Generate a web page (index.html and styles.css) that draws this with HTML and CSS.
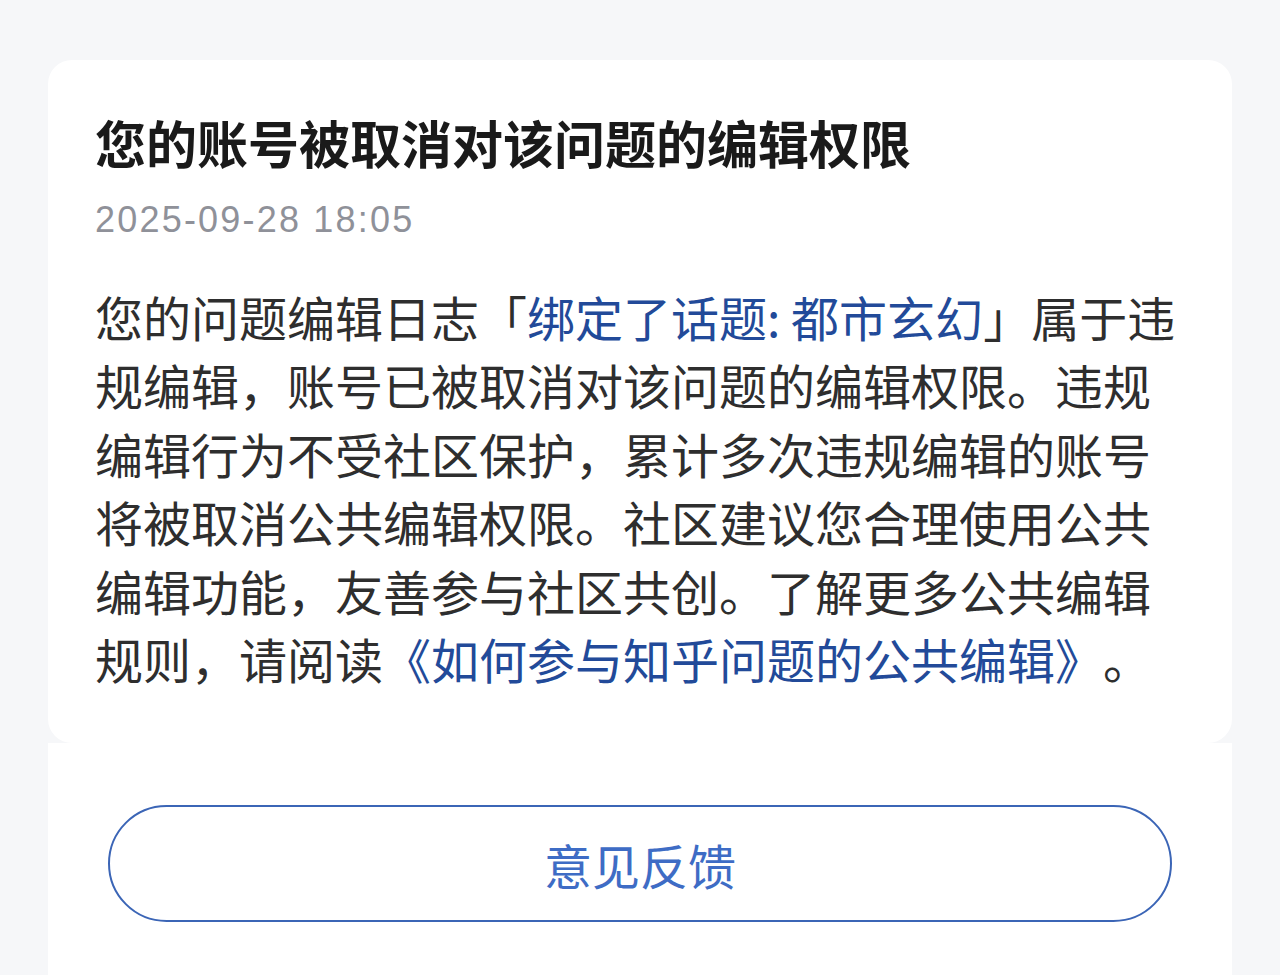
FILE: index.html
```html
<!DOCTYPE html>
<html lang="zh-CN">
<head>
<meta charset="utf-8">
<title>编辑权限通知</title>
<link rel="stylesheet" href="styles.css">
</head>
<body>
<div class="page">
  <section class="card">
    <h1 class="title">您的账号被取消对该问题的编辑权限</h1>
    <div class="date">2025-09-28 18:05</div>
    <p class="content">您的问题编辑日志「<a class="link" href="#">绑定了话题: 都市玄幻</a>」属于违规编辑，账号已被取消对该问题的编辑权限。违规编辑行为不受社区保护，累计多次违规编辑的账号将被取消公共编辑权限。社区建议您合理使用公共编辑功能，友善参与社区共创。了解更多公共编辑规则，请阅读<a class="link" href="#">《如何参与知乎问题的公共编辑》</a>。</p>
  </section>
  <section class="actions">
    <button class="feedback" type="button">意见反馈</button>
  </section>
</div>
</body>
</html>
```

FILE: styles.css
```css
html, body {
  margin: 0;
  padding: 0;
}
body {
  background: #f6f7f9;
  font-family: "Noto Sans CJK SC", "Noto Sans", sans-serif;
  width: 1280px;
  height: 975px;
  overflow: hidden;
  text-spacing-trim: space-all;
}
.page {
  padding: 60px 48px 0;
  display: flex;
  flex-direction: column;
}
.card {
  background: #ffffff;
  border-radius: 24px;
  padding: 52px 47px 51px;
}
.title {
  margin: 0;
  font-size: 51px;
  line-height: 60px;
  font-weight: 700;
  color: #1a1a1a;
}
.date {
  margin-top: 26px;
  font-family: "Liberation Sans", Arial, sans-serif;
  font-size: 36px;
  line-height: 44px;
  letter-spacing: 2.2px;
  color: #8f9199;
}
.content {
  margin: 40px 0 0;
  font-size: 48px;
  line-height: 68.4px;
  font-weight: 400;
  color: #2e2e2e;
  text-spacing-trim: space-all;
}
.link {
  color: #224a99;
  text-decoration: none;
}
.actions {
  background: #ffffff;
  padding: 62px 60px 0;
  height: 232px;
  box-sizing: border-box;
}
.feedback {
  display: block;
  width: 100%;
  height: 117px;
  box-sizing: border-box;
  background: #ffffff;
  border: 2.5px solid #3b65b6;
  border-radius: 60px;
  color: #3e6cc5;
  font-family: "Noto Sans CJK SC", sans-serif;
  font-size: 48px;
  font-weight: 400;
  padding: 0;
  cursor: pointer;
}
```
